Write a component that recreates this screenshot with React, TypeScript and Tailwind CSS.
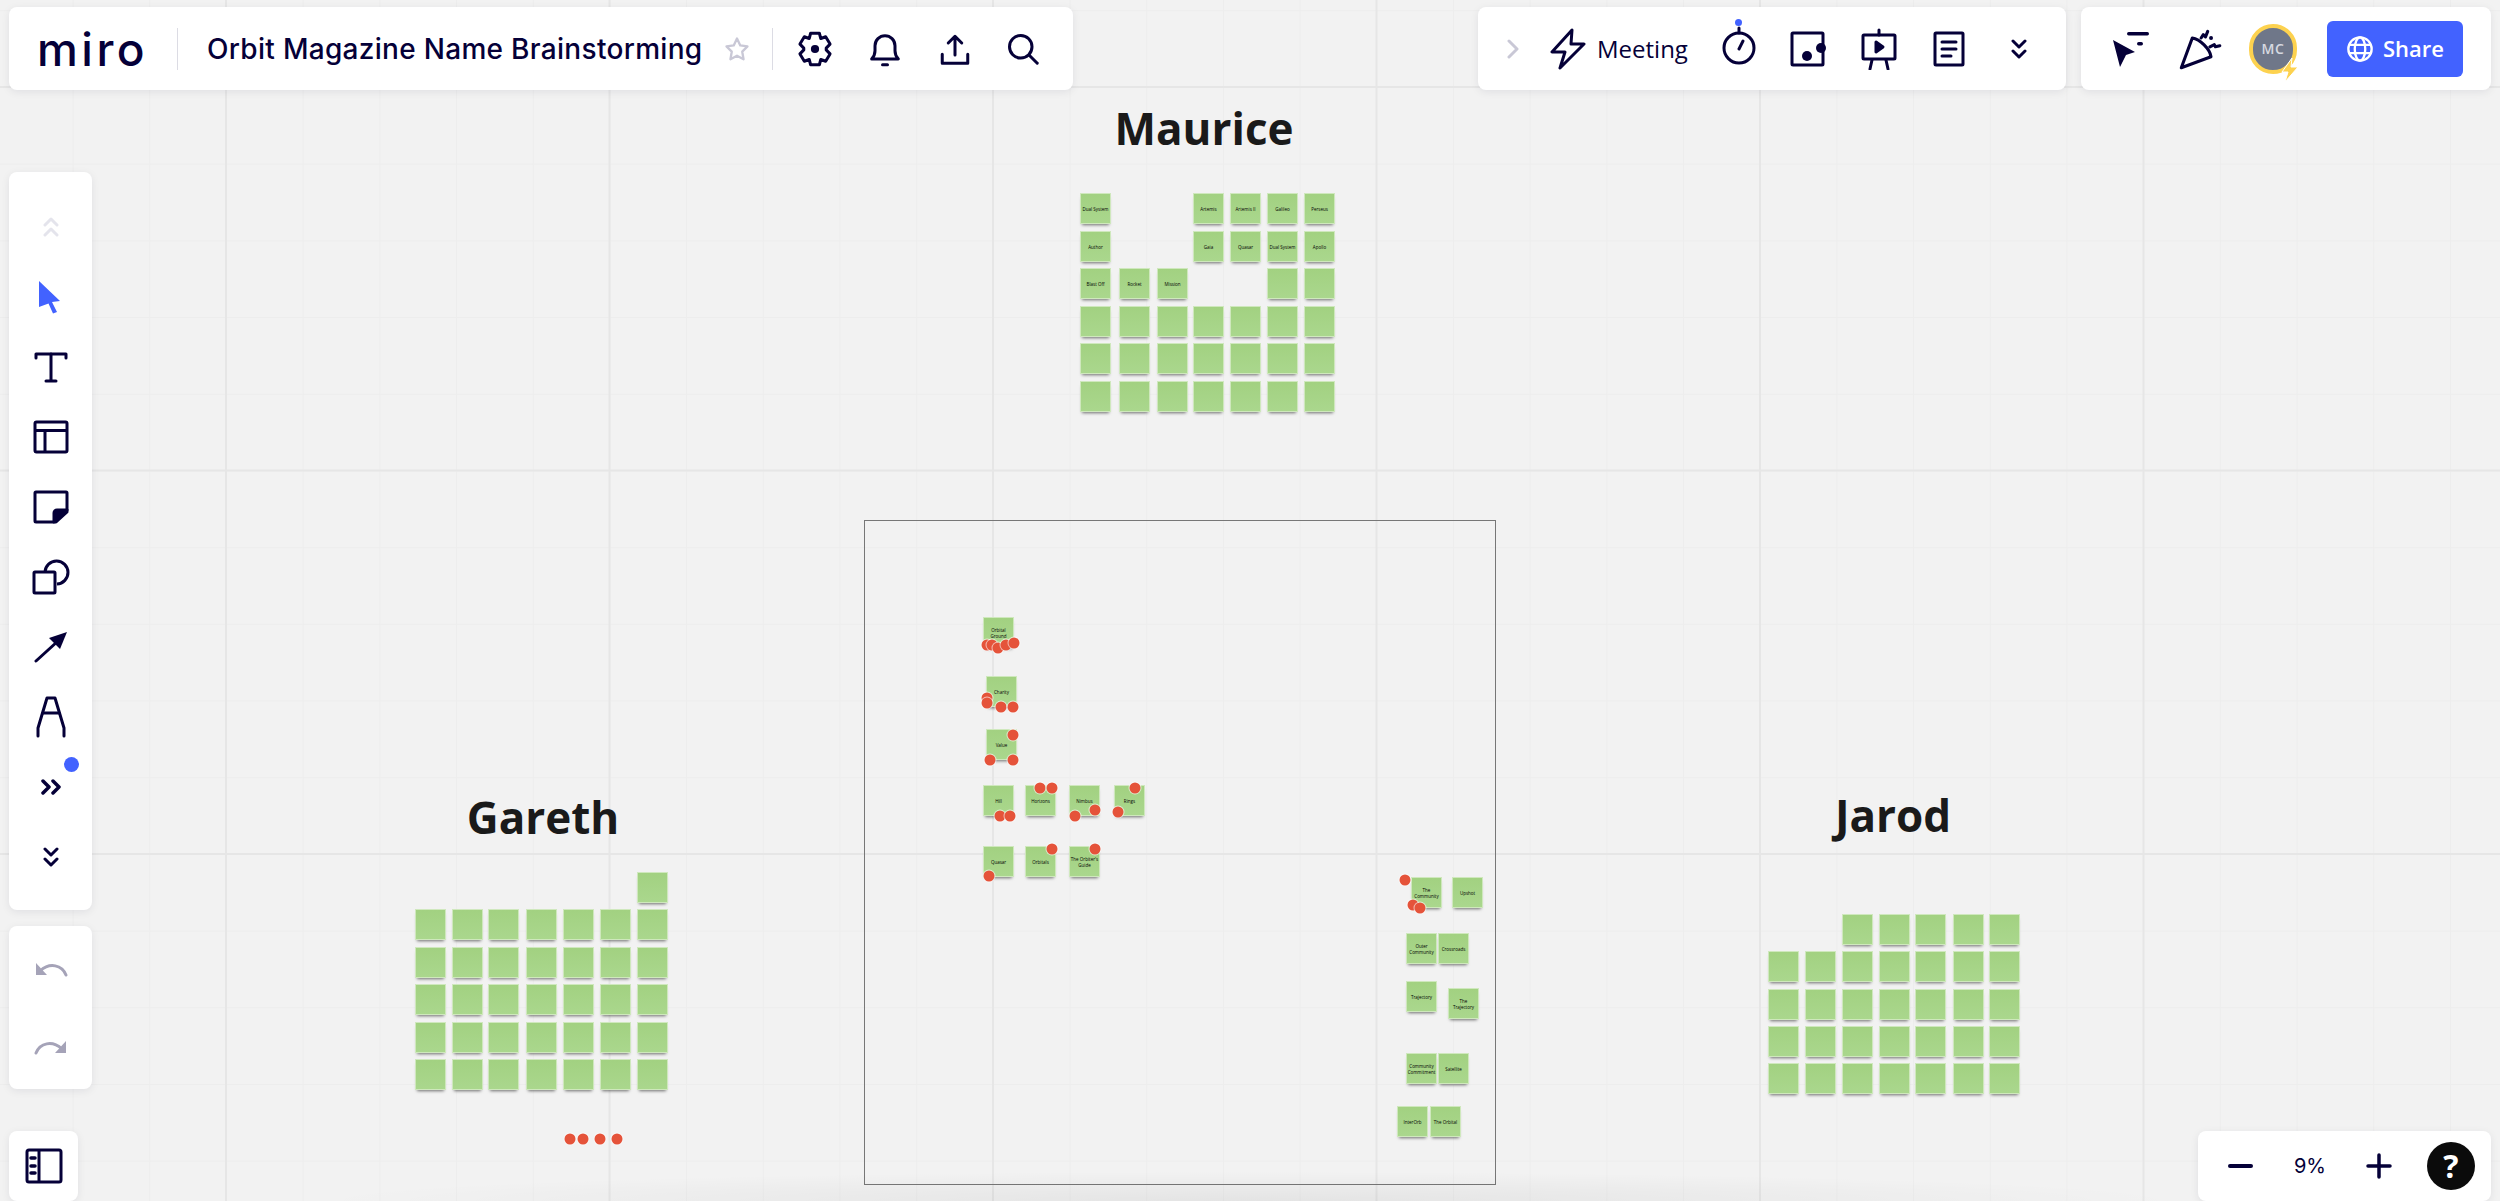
import { ReactNode } from 'react';

const NAVY = '#050038';

type Note = { x: number; y: number; text?: string };
type Dot = [number, number];

const rowsToNotes = (xs: number[], ys: number[], skip: (col: number, row: number) => boolean = () => false) => {
  const out: Note[] = [];
  ys.forEach((y, r) => xs.forEach((x, c) => {
    if (!skip(c, r)) out.push({ x, y });
  }));
  return out;
};

const mauriceLabels: Record<string, string> = {
  '0-0': 'Dual System', '3-0': 'Artemis', '4-0': 'Artemis II', '5-0': 'Galileo', '6-0': 'Perseus',
  '0-1': 'Author', '3-1': 'Gaia', '4-1': 'Quasar', '5-1': 'Dual System', '6-1': 'Apollo',
  '0-2': 'Blast Off', '1-2': 'Rocket', '2-2': 'Mission',
};
const mauriceXs = [1080, 1119, 1157, 1193, 1230, 1267, 1304];
const mauriceYs = [193, 231, 268, 306, 343, 381];
const mauriceNotes: Note[] = [];
mauriceYs.forEach((y, r) => mauriceXs.forEach((x, c) => {
  const empty = (r < 2 && (c === 1 || c === 2)) || (r === 2 && (c === 3 || c === 4));
  if (!empty) mauriceNotes.push({ x, y, text: mauriceLabels[`${c}-${r}`] });
}));

const garethNotes = [
  { x: 637, y: 872 },
  ...rowsToNotes([415, 452, 488, 526, 563, 600, 637], [909, 947, 984, 1022, 1059]),
];

const jarodNotes = rowsToNotes(
  [1768, 1805, 1842, 1879, 1915, 1953, 1989],
  [914, 951, 989, 1026, 1063],
  (c, r) => r === 0 && c < 2,
);

const frameNotes: Note[] = [
  { x: 983, y: 617, text: 'Orbital Ground' },
  { x: 986, y: 676, text: 'Charity' },
  { x: 986, y: 729, text: 'Value' },
  { x: 983, y: 785, text: 'Hill' },
  { x: 1025, y: 785, text: 'Horizons' },
  { x: 1069, y: 785, text: 'Nimbus' },
  { x: 1114, y: 785, text: 'Rings' },
  { x: 983, y: 846, text: 'Quasar' },
  { x: 1025, y: 846, text: 'Orbitals' },
  { x: 1069, y: 846, text: "The Orbiter's Guide" },
  { x: 1411, y: 877, text: 'The Community' },
  { x: 1452, y: 877, text: 'Upshot' },
  { x: 1406, y: 933, text: 'Outer Community' },
  { x: 1438, y: 933, text: 'Crossroads' },
  { x: 1406, y: 981, text: 'Trajectory' },
  { x: 1448, y: 988, text: 'The Trajectory' },
  { x: 1406, y: 1053, text: 'Community Commitment' },
  { x: 1438, y: 1053, text: 'Satellite' },
  { x: 1397, y: 1106, text: 'InterOrb' },
  { x: 1430, y: 1106, text: 'The Orbital' },
];

const dots: Dot[] = [
  [987, 645], [992, 645], [998, 648], [1006, 645], [1014, 643],
  [987, 698], [987, 703], [1001, 707], [1013, 707],
  [1013, 735], [990, 760], [1013, 760],
  [1000, 816], [1010, 816], [1040, 788], [1052, 788], [1095, 810], [1075, 816], [1135, 788], [1118, 812],
  [989, 876], [1052, 849], [1095, 849],
  [1405, 880], [1413, 905], [1420, 908],
  [570, 1139], [583, 1139], [600, 1139], [617, 1139],
];

function Sticky({ x, y, text }: Note) {
  return (
    <div
      className="absolute flex h-[31px] w-[31px] items-center justify-center border border-[#cfe8bd] bg-gradient-to-b from-[#a2d181] to-[#aad78d] text-center font-['Open_Sans',sans-serif] text-[4.5px] leading-[6px] text-black shadow-[0_3px_3px_-2px_rgba(0,0,0,0.55)]"
      style={{ left: x, top: y }}
    >
      {text}
    </div>
  );
}

function Heading({ x, y, children }: { x: number; y: number; children: ReactNode }) {
  return (
    <div
      className="absolute -translate-x-1/2 -translate-y-1/2 font-['Open_Sans',sans-serif] text-[44px] leading-none font-bold text-[#1a1a1a]"
      style={{ left: x, top: y }}
    >
      {children}
    </div>
  );
}

function Icon({ size = 36, children, color = NAVY, sw = 2 }: { size?: number; children: ReactNode; color?: string; sw?: number }) {
  return (
    <svg width={size} height={size} viewBox="0 0 24 24" fill="none" stroke={color} strokeWidth={sw} strokeLinecap="round" strokeLinejoin="round">
      {children}
    </svg>
  );
}

function DoubleChevron({ color = NAVY, up = false }: { color?: string; up?: boolean }) {
  return (
    <svg width="16" height="22" viewBox="0 0 16 22" fill="none" stroke={color} strokeWidth="3" strokeLinecap="round" strokeLinejoin="round">
      {up ? (
        <>
          <path d="M2 9l6-6 6 6" />
          <path d="M2 19l6-6 6 6" />
        </>
      ) : (
        <>
          <path d="M2 3l6 6 6-6" />
          <path d="M2 13l6 6 6-6" />
        </>
      )}
    </svg>
  );
}

function Slot({ w, children, className = '' }: { w: string; children: ReactNode; className?: string }) {
  return <div className={`flex shrink-0 items-center justify-center ${w} ${className}`}>{children}</div>;
}

function ToolItem({ children }: { children: ReactNode }) {
  return <div className="flex h-[70px] items-center justify-center">{children}</div>;
}

function TopLeftBar() {
  return (
    <div className="absolute top-[7px] left-[9px] flex h-[83px] w-[1064px] items-center rounded-lg bg-white shadow-[0_2px_8px_rgba(5,0,56,0.08)]">
      <div className="ml-[28px] w-[110px] font-['Inter',sans-serif] text-[46px] leading-none font-medium tracking-[3.5px] text-[#050038]">miro</div>
      <div className="ml-[30px] h-[42px] w-px bg-[#dcdce4]" />
      <div className="ml-[29px] w-[496px] font-['Inter',sans-serif] text-[28px] leading-none font-medium tracking-[0.3px] whitespace-nowrap text-[#050038]">
        Orbit Magazine Name Brainstorming
      </div>
      <Slot w="w-[28px]" className="ml-[20px]">
        <Icon size={30} color="#c9c8d6">
          <path d="M12 3l2.8 5.9 6.2.9-4.5 4.5 1.1 6.5-5.6-3.1-5.6 3.1 1.1-6.5L3 9.8l6.2-.9z" />
        </Icon>
      </Slot>
      <div className="ml-[21px] h-[42px] w-px bg-[#dcdce4]" />
      <Slot w="w-[70px]" className="ml-[7px]">
        <Icon size={42} sw={1.7}>
          <path d="M9.5 3h5l.8 3 2.8-1 2.5 4.2-2.2 2.3v1l2.2 2.3-2.5 4.2-2.8-1-.8 3h-5l-.8-3-2.8 1-2.5-4.2 2.2-2.3v-1L3.4 9.2 5.9 5l2.8 1z" />
          <circle cx="12" cy="12" r="1.5" fill={NAVY} />
        </Icon>
      </Slot>
      <Slot w="w-[70px]">
        <Icon size={40} sw={1.8}>
          <path d="M4 18c1.6-1.8 2-3 2-5v-3a6 6 0 0 1 12 0v3c0 2 .4 3.2 2 5z" />
          <path d="M10.5 21.5h3" />
        </Icon>
      </Slot>
      <Slot w="w-[70px]">
        <Icon>
          <path d="M12 16V3.5M7.5 8L12 3.5 16.5 8" />
          <path d="M3.5 15.5v6h17v-6" />
        </Icon>
      </Slot>
      <Slot w="w-[66px]">
        <Icon>
          <circle cx="10.5" cy="10.5" r="7.5" />
          <path d="M16 16l5.5 5.5" />
        </Icon>
      </Slot>
    </div>
  );
}

function MeetingBar() {
  return (
    <div className="absolute top-[7px] left-[1478px] flex h-[83px] w-[588px] items-center rounded-lg bg-white shadow-[0_2px_8px_rgba(5,0,56,0.08)]">
      <Slot w="w-[20px]" className="ml-[25px]">
        <svg width="12" height="22" viewBox="0 0 12 22" fill="none" stroke="#c9c8d6" strokeWidth="3" strokeLinecap="round" strokeLinejoin="round">
          <path d="M2 3l8 8-8 8" />
        </svg>
      </Slot>
      <Slot w="w-[36px]" className="ml-[27px]">
        <svg width="36" height="42" viewBox="0 0 36 42" fill="none" stroke={NAVY} strokeWidth="3" strokeLinejoin="round" strokeLinecap="round">
          <path d="M22 2L2 24h13l-5 16 24-24H21z" />
        </svg>
      </Slot>
      <div className="ml-[11px] w-[92px] font-['Open_Sans',sans-serif] text-[24px] leading-none text-[#050038]">Meeting</div>
      <Slot w="w-[70px]" className="relative ml-[15px]">
        <span className="absolute top-[-5px] left-[31px] h-[7px] w-[7px] rounded-full bg-[#4262ff]" />
        <svg width="36" height="42" viewBox="0 0 36 42" fill="none" stroke={NAVY} strokeWidth="3" strokeLinecap="round" className="mb-[7px]">
          <circle cx="18" cy="24" r="15" />
          <path d="M18 9V4" />
          <path d="M18 25l4-8" />
        </svg>
      </Slot>
      <Slot w="w-[70px]">
        <svg width="38" height="36" viewBox="0 0 38 36" fill="none" stroke={NAVY} strokeWidth="3" strokeLinejoin="round">
          <rect x="2" y="2" width="31" height="32" rx="1" />
          <circle cx="31" cy="17" r="5" fill={NAVY} stroke="none" />
          <circle cx="17" cy="25" r="5" fill={NAVY} stroke="none" />
        </svg>
      </Slot>
      <Slot w="w-[70px]">
        <svg width="36" height="42" viewBox="0 0 36 42" fill="none" stroke={NAVY} strokeWidth="3" strokeLinejoin="round" strokeLinecap="round">
          <path d="M18 2v5" />
          <rect x="2" y="7" width="32" height="24" rx="1" />
          <path d="M15 14l7 5-7 5z" fill={NAVY} />
          <path d="M11 32l-2 9M25 32l2 9" />
        </svg>
      </Slot>
      <Slot w="w-[70px]">
        <svg width="32" height="36" viewBox="0 0 32 36" fill="none" stroke={NAVY} strokeWidth="3" strokeLinecap="round" strokeLinejoin="round">
          <rect x="2" y="2" width="28" height="32" rx="1" />
          <path d="M9 11h14M9 18h14M9 25h9" />
        </svg>
      </Slot>
      <Slot w="w-[70px]">
        <DoubleChevron />
      </Slot>
    </div>
  );
}

function ShareBar() {
  return (
    <div className="absolute top-[7px] left-[2081px] flex h-[83px] w-[410px] items-center rounded-lg bg-white shadow-[0_2px_8px_rgba(5,0,56,0.08)]">
      <Slot w="w-[68px]" className="ml-[16px]">
        <svg width="38" height="36" viewBox="0 0 38 36" fill={NAVY}>
          <path d="M1 9l22 12-9 3-6 12z" />
          <rect x="15" y="1" width="22" height="3.5" rx="1.7" />
          <rect x="25" y="11" width="6" height="3.5" rx="1.7" />
        </svg>
      </Slot>
      <Slot w="w-[70px]">
        <svg width="44" height="44" viewBox="0 0 40 40" fill="none" stroke={NAVY} strokeWidth="2.8" strokeLinecap="round" strokeLinejoin="round">
          <path d="M13 10L3 37l27-10c-1-7-10-16-17-17z" />
          <path d="M21 10l2-3 2 2 2-5" />
          <path d="M29 18l4-2 1 2 4-1" />
          <path d="M30 10h.1" strokeWidth="3.5" />
        </svg>
      </Slot>
      <div className="relative ml-[14px] flex h-[50px] w-[48px] shrink-0 items-center justify-center rounded-full border-[4px] border-[#fdd24f] bg-[#6f7789] font-['Open_Sans',sans-serif] text-[14px] font-semibold tracking-[0.5px] text-[#d6d9e0]">
        MC
        <svg width="20" height="26" viewBox="0 0 20 26" className="absolute top-[29px] left-[27px]" fill="#fdd24f" stroke="#fff" strokeWidth="1">
          <path d="M12 1L2 15h6l-3 10 13-15h-7z" />
        </svg>
      </div>
      <div className="ml-[30px] flex h-[56px] w-[136px] items-center justify-center gap-[9px] rounded-md bg-[#4262ff] font-['Open_Sans',sans-serif] text-[22px] font-semibold text-white">
        <svg width="28" height="28" viewBox="0 0 24 24" fill="none" stroke="#fff" strokeWidth="2">
          <circle cx="12" cy="12" r="10" />
          <ellipse cx="12" cy="12" rx="4.5" ry="10" />
          <path d="M2.5 8.5h19M2.5 15.5h19" />
        </svg>
        Share
      </div>
    </div>
  );
}

function ToolBar() {
  return (
    <div className="absolute top-[172px] left-[9px] flex h-[738px] w-[83px] flex-col rounded-lg bg-white pt-[20px] shadow-[0_2px_8px_rgba(5,0,56,0.08)]">
      <ToolItem><DoubleChevron up color="#e4e4ec" /></ToolItem>
      <ToolItem>
        <svg width="24" height="34" viewBox="0 0 24 34" fill="#4262ff" className="mr-[3px]">
          <path d="M2 1l21 20-8 1 5 10-4 1.5-4.500-10L2 27z" />
        </svg>
      </ToolItem>
      <ToolItem>
        <svg width="34" height="34" viewBox="0 0 34 34" fill="none" stroke={NAVY} strokeWidth="3" strokeLinecap="round" strokeLinejoin="round">
          <path d="M2 8V4h30v4" />
          <path d="M17 4v27M12 31h10" />
        </svg>
      </ToolItem>
      <ToolItem>
        <svg width="36" height="34" viewBox="0 0 36 34" fill="none" stroke={NAVY} strokeWidth="3" strokeLinejoin="round">
          <rect x="2" y="2" width="32" height="30" rx="1.5" />
          <path d="M2 10.5h32M12 10.5V32" />
        </svg>
      </ToolItem>
      <ToolItem>
        <svg width="36" height="34" viewBox="0 0 36 34" fill="none" stroke={NAVY} strokeWidth="3" strokeLinejoin="round">
          <path d="M3 2h30a1 1 0 0 1 1 1v19L23 32H3a1 1 0 0 1-1-1V3a1 1 0 0 1 1-1z" />
          <path d="M34 20H24a3 3 0 0 0-3 3v9z" fill={NAVY} />
        </svg>
      </ToolItem>
      <ToolItem>
        <svg width="38" height="36" viewBox="0 0 38 36" fill="none" stroke={NAVY} strokeWidth="3" strokeLinejoin="round">
          <path d="M13 13a11.5 11.5 0 1 1 12 12" />
          <rect x="2" y="13" width="21" height="21" rx="1" />
        </svg>
      </ToolItem>
      <ToolItem>
        <svg width="34" height="32" viewBox="0 0 34 32" fill="none" stroke={NAVY} strokeWidth="3" strokeLinecap="round">
          <path d="M2 30L24 10" />
          <path d="M33 1L15 7l11 11z" fill={NAVY} stroke="none" />
        </svg>
      </ToolItem>
      <ToolItem>
        <svg width="30" height="42" viewBox="0 0 30 42" fill="none" stroke={NAVY} strokeWidth="3" strokeLinecap="round" strokeLinejoin="round">
          <path d="M2 40v-8L11 2h8l9 30v8" />
          <path d="M7 17h16" />
        </svg>
      </ToolItem>
      <ToolItem>
        <svg width="22" height="16" viewBox="0 0 22 16" fill="none" stroke={NAVY} strokeWidth="3.5" strokeLinecap="round" strokeLinejoin="round">
          <path d="M3 2l6 6-6 6M13 2l6 6-6 6" />
        </svg>
      </ToolItem>
      <ToolItem><DoubleChevron /></ToolItem>
      <span className="absolute top-[585px] left-[55px] h-[15px] w-[15px] rounded-full bg-[#4262ff]" />
    </div>
  );
}

function HistoryBar() {
  return (
    <div className="absolute top-[926px] left-[9px] flex h-[163px] w-[83px] flex-col items-center justify-center gap-[62px] rounded-lg bg-white shadow-[0_2px_8px_rgba(5,0,56,0.08)]">
      <svg width="34" height="16" viewBox="0 0 34 16" fill="none" stroke="#a5a3b8" strokeWidth="3" strokeLinecap="round">
        <path d="M32 14C28 4 16 1 6 10" />
        <path d="M2 2v12h11z" fill="#a5a3b8" stroke="none" />
      </svg>
      <svg width="34" height="16" viewBox="0 0 34 16" fill="none" stroke="#a5a3b8" strokeWidth="3" strokeLinecap="round">
        <path d="M2 14C6 4 18 1 28 10" />
        <path d="M32 2v12H21z" fill="#a5a3b8" stroke="none" />
      </svg>
    </div>
  );
}

function BoardsButton() {
  return (
    <div className="absolute top-[1131px] left-[9px] flex h-[70px] w-[69px] items-center justify-center rounded-lg bg-white shadow-[0_2px_8px_rgba(5,0,56,0.08)]">
      <svg width="38" height="36" viewBox="0 0 38 36" fill="none" stroke={NAVY} strokeWidth="3" strokeLinejoin="round">
        <rect x="2" y="2" width="34" height="32" rx="2" />
        <path d="M14 2v32" />
        <path d="M6 10h4M6 18h4M6 25h4" strokeLinecap="round" strokeWidth="3.5" />
      </svg>
    </div>
  );
}

function ZoomBar() {
  return (
    <div className="absolute top-[1131px] left-[2198px] flex h-[70px] w-[293px] items-center rounded-lg bg-white shadow-[0_2px_8px_rgba(5,0,56,0.08)]">
      <Slot w="w-[44px]" className="ml-[20px]">
        <span className="h-[4px] w-[25px] rounded-full bg-[#050038]" />
      </Slot>
      <div className="ml-[22px] w-[52px] text-center font-['Inter',sans-serif] text-[20px] leading-none text-[#050038]">9%</div>
      <Slot w="w-[44px]" className="ml-[21px]">
        <svg width="26" height="26" viewBox="0 0 26 26" stroke={NAVY} strokeWidth="3.5" strokeLinecap="round">
          <path d="M13 2v22M2 13h22" />
        </svg>
      </Slot>
      <div className="ml-[26px] flex h-[48px] w-[48px] items-center justify-center rounded-full bg-[#0b0b0b] font-['Open_Sans',sans-serif] text-[32px] leading-none font-bold text-white">?</div>
    </div>
  );
}

export default function App() {
  return (
    <div className="relative h-[1201px] w-[2500px] overflow-hidden bg-[#f2f2f2] bg-[linear-gradient(to_right,#e6e6e6_2px,transparent_2px),linear-gradient(to_bottom,#e6e6e6_2px,transparent_2px),linear-gradient(to_right,#ededed_1px,transparent_1px),linear-gradient(to_bottom,#ededed_1px,transparent_1px)] bg-[size:383.5px_383.5px,383.5px_383.5px,76.7px_76.7px,76.7px_76.7px] bg-[position:225px_86px,225px_86px,72.6px_10.3px,72.6px_10.3px]">
      <div className="absolute top-[520px] left-[864px] h-[665px] w-[632px] border border-[#777]" />

      <Heading x={1204} y={128}>Maurice</Heading>
      <Heading x={543} y={817}>Gareth</Heading>
      <Heading x={1893} y={815}>Jarod</Heading>

      {[...mauriceNotes, ...garethNotes, ...jarodNotes, ...frameNotes].map((n, i) => (
        <Sticky key={i} {...n} />
      ))}

      {dots.map(([x, y], i) => (
        <span
          key={i}
          className="absolute h-[11px] w-[11px] -translate-x-1/2 -translate-y-1/2 rounded-full bg-[#e5533a] ring-1 ring-white/60"
          style={{ left: x, top: y }}
        />
      ))}

      <div className="absolute bottom-0 left-[300px] h-[30px] w-[1900px] bg-[radial-gradient(ellipse_at_bottom,rgba(0,0,0,0.06),transparent_70%)]" />

      <TopLeftBar />
      <MeetingBar />
      <ShareBar />
      <ToolBar />
      <HistoryBar />
      <BoardsButton />
      <ZoomBar />
    </div>
  );
}
